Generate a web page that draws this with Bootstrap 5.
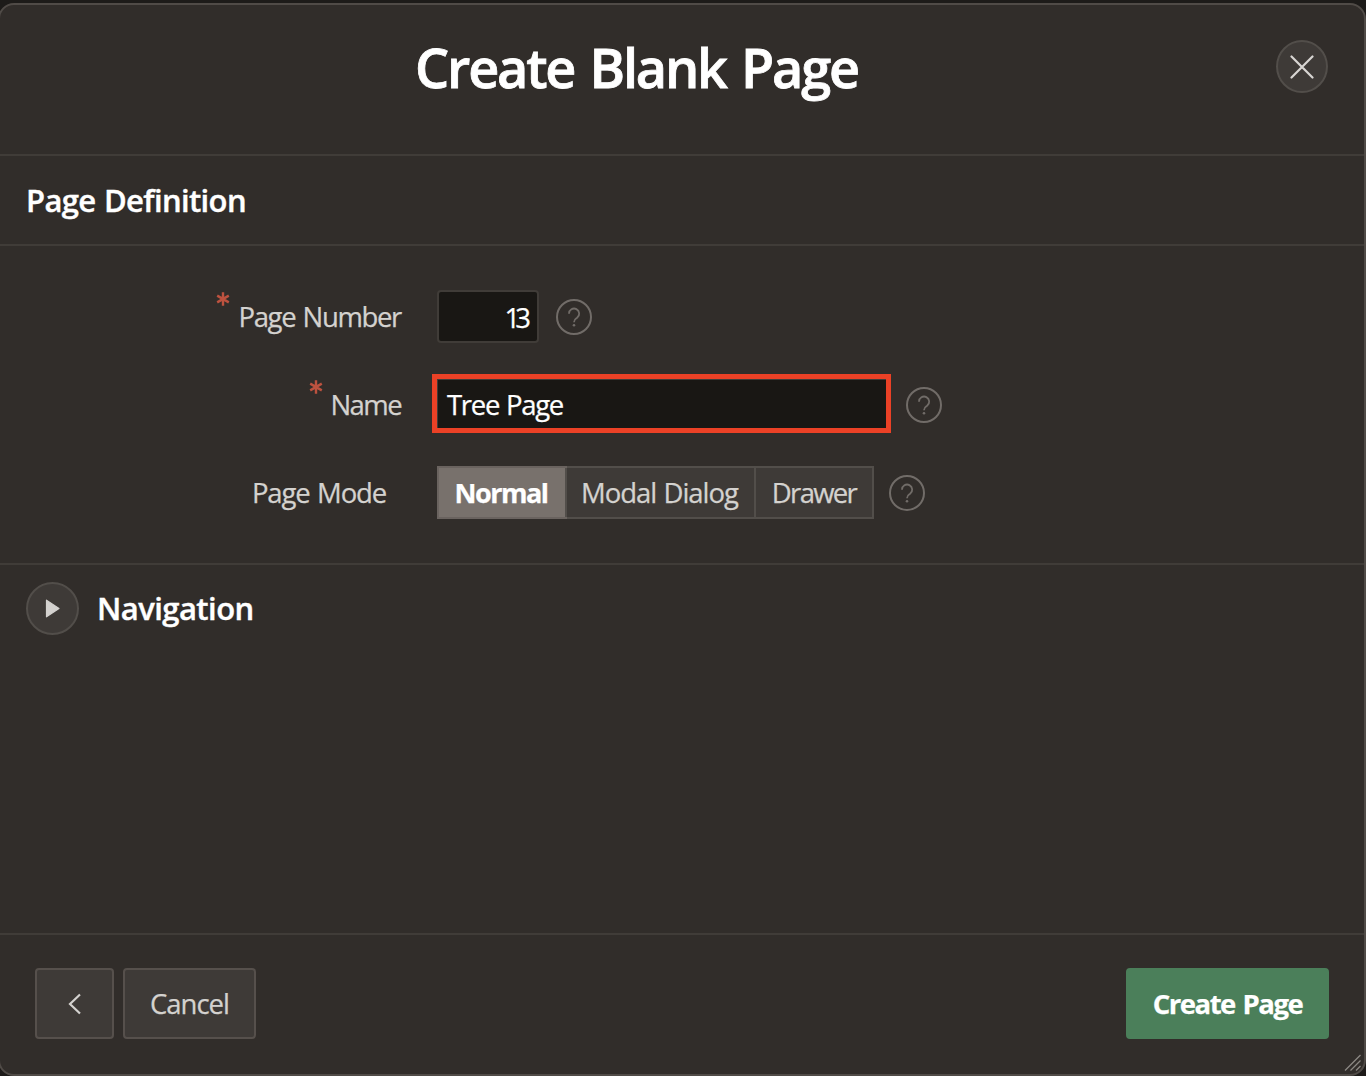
<!DOCTYPE html>
<html lang="en" data-bs-theme="dark">
<head>
<meta charset="utf-8">
<meta name="viewport" content="width=device-width, initial-scale=1">
<title>Create Blank Page</title>
<link href="https://cdn.jsdelivr.net/npm/bootstrap@5.3.0/dist/css/bootstrap.min.css" rel="stylesheet">
<style>
  body { margin: 0; height: 1076px; overflow: hidden; background: #1d1b19; font-family: "Open Sans", "Noto Sans", sans-serif; font-size: 27.5px; line-height: 1.3; color: #d4d2cf; padding-top: 3px; -webkit-text-stroke: .25px currentColor; }
  .wizard { height: 1073px; width: 1368px; margin-left: -2px; background: #312d2a; border: 2px solid #504b47; border-radius: 16px; overflow: hidden; position: relative; }
  .wizard > * { flex-shrink: 0; }
  .rule-b { border-bottom: 2px solid #403c38; }
  .wizard-head { height: 151px; padding: 35px 36px 0 0; }
  .wizard-title { font-size: 54px; font-weight: 600; line-height: 60px; color: #fff; margin: -3px 0 0 415px; letter-spacing: -2.2px; word-spacing: 3.5px; -webkit-text-stroke: .8px currentColor; }
  .round-btn { width: 53px; height: 53px; border: 2px solid #524e4a; border-radius: 50%; background: #3e3a37; padding: 0; flex: none; }
  .wizard-head .round-btn { width: 52px; }
  .region-head { height: 90px; padding-left: 26px; }
  .region-title { font-size: 31px; font-weight: 600; line-height: 40px; color: #fff; margin: 0; -webkit-text-stroke: .4px currentColor; }
  .fields { height: 319px; padding-top: 44px; }
  .field-line { height: 53px; margin-bottom: 35px; }
  .field-label { width: 437px; padding-right: 36px; margin-top: 1px; text-align: right; white-space: nowrap; flex: none; }
  .field-label.opt { padding-right: 51px; }
  .req { margin-right: 8px; margin-top: -36px; }
  .field-input { height: 53px; border: 2px solid #403c38; border-radius: 4px; background: #191714; color: #fff; padding: 2px 7px 0; font-size: 27.5px; }
  .num { width: 102px; padding-right: 11px; }
  .hl { width: 459px; height: 59px; border: 5px solid #eb4126; margin: -2px 0 0 -5px; background: #191714; flex: none; }
  .hl .field-input { width: 449px; height: 49px; border-width: 1px 0 0 1px; border-radius: 0; padding-left: 9px; }
  .modes { height: 53px; border: 2px solid #524e4a; border-radius: 0; background: #3e3a37; }
  .mode { border: 0; border-radius: 0; padding: 0; background: none; color: #d4d2cf; font: inherit; line-height: 50px; white-space: nowrap; text-align: center; }
  .mode + .mode { border-left: 2px solid #524e4a; }
  .mode.on { background: #78716c; color: #fff; font-weight: 700; box-shadow: 0 0 0 2px #6a635f; }
  .help { flex: none; width: 36px; height: 36px; margin: 1px 0 0 15px; }
  .num + .help { margin-left: 17px; }
  .nav-region { height: 368px; padding: 17px 0 0 26px; }
  .wizard-foot { height: 141px; border-top: 2px solid #403c38; padding: 33px 35px 0 35px; }
  .foot-btn { height: 71px; border: 2px solid #56504c; border-radius: 4px; background: #3e3a37; color: #d4d2cf; font-size: 27.5px; padding: 0; white-space: nowrap; }
  .back { width: 79px; }
  .cancel { width: 133px; margin-left: 9px; }
  .foot-btn.go { width: 203px; background: #4b7f5a; border-color: #4b7f5a; color: #fff; font-weight: 700; }
  .grip { position: absolute; right: 3px; bottom: 3px; }
  .t-num { letter-spacing: -1.35px; word-spacing: 1.5px } .t-name { letter-spacing: -1.6px } .t-mode { letter-spacing: -1.15px; word-spacing: 1.5px }
  .t-13 { letter-spacing: -5px } .t-tree { letter-spacing: -1.3px; word-spacing: 1px } .t-on { letter-spacing: -1.5px; font-size: 27px; margin-left: -2px }
  .t-md { letter-spacing: -1px; word-spacing: 1px; margin-left: -2px } .t-dr { letter-spacing: -1.7px } .t-can { letter-spacing: -1px }
  .t-go { letter-spacing: -1.5px; word-spacing: 2px } .t-pd { letter-spacing: -.63px; word-spacing: 1px } .t-nav { letter-spacing: -.55px; margin: 6px 0 0 18px }
</style>
<script src="https://cdn.jsdelivr.net/npm/bootstrap@5.3.0/dist/js/bootstrap.bundle.min.js"></script>
</head>
<body>
<svg width="0" height="0" class="d-none">
  <symbol id="help" viewBox="0 0 36 36"><g fill="none" stroke="#716c68"><circle cx="18" cy="18" r="17" stroke-width="2"/><path d="M13 14.7a5.1 5.1 0 1 1 8.1 4.1c-1.9 1.3-3.1 1.9-3.1 4.4" stroke-width="1.8"/></g><circle cx="18" cy="26.3" r="1.3" fill="#716c68"/></symbol>
  <symbol id="req" viewBox="0 0 14 14"><path d="M7 .3v13.4M1.2 3.6l11.6 6.8M12.8 3.6 1.2 10.4" stroke="#bd523f" stroke-width="2.4"/></symbol>
</svg>
<main class="wizard d-flex flex-column">
  <header class="wizard-head rule-b d-flex justify-content-between align-items-start">
    <h1 class="wizard-title">Create Blank Page</h1>
    <button class="btn round-btn d-flex align-items-center justify-content-center" type="button" aria-label="Close"><svg width="24" height="24" viewBox="0 0 24 24"><path d="M1.5 1.5l21 21M22.5 1.5l-21 21" stroke="#d8d6d3" stroke-width="2.2" stroke-linecap="round"/></svg></button>
  </header>
  <div class="region-head rule-b d-flex align-items-center"><h2 class="region-title t-pd">Page Definition</h2></div>
  <form class="fields rule-b">
    <div class="field-line d-flex align-items-center">
      <label class="field-label d-flex align-items-center justify-content-end"><svg class="req" width="14" height="14"><use href="#req"/></svg><span class="t-num">Page Number</span></label>
      <div class="field-input num d-flex align-items-center justify-content-end"><span class="t-13">13</span></div>
      <svg class="help"><use href="#help"/></svg>
    </div>
    <div class="field-line d-flex align-items-center">
      <label class="field-label d-flex align-items-center justify-content-end"><svg class="req" width="14" height="14"><use href="#req"/></svg><span class="t-name">Name</span></label>
      <div class="hl"><div class="field-input d-flex align-items-center"><span class="t-tree">Tree Page</span></div></div>
      <svg class="help"><use href="#help"/></svg>
    </div>
    <div class="field-line d-flex align-items-center">
      <label class="field-label opt"><span class="t-mode">Page Mode</span></label>
      <div class="modes d-flex">
        <button type="button" class="mode on" style="width:126px"><span class="t-on">Normal</span></button>
        <button type="button" class="mode" style="width:189px"><span class="t-md">Modal Dialog</span></button>
        <button type="button" class="mode" style="width:118px"><span class="t-dr">Drawer</span></button>
      </div>
      <svg class="help"><use href="#help"/></svg>
    </div>
  </form>
  <section class="nav-region d-flex align-items-start">
    <button class="btn round-btn d-flex align-items-center justify-content-center" type="button" aria-label="Expand"><svg width="15" height="19" viewBox="0 0 15 19"><path d="M1.5 1.2v16.6L14 9.5z" fill="#d4d2cf" stroke="#d4d2cf" stroke-width="1.2" stroke-linejoin="round"/></svg></button>
    <h2 class="region-title t-nav">Navigation</h2>
  </section>
  <footer class="wizard-foot d-flex align-items-start">
    <button class="btn foot-btn back d-flex align-items-center justify-content-center" type="button" aria-label="Back"><svg width="14" height="22" viewBox="0 0 14 22"><path d="M12 1.5 2 11l10 9.5" fill="none" stroke="#d4d2cf" stroke-width="2.2"/></svg></button>
    <button class="btn foot-btn cancel" type="button"><span class="t-can">Cancel</span></button>
    <button class="btn foot-btn go ms-auto" type="button"><span class="t-go">Create Page</span></button>
  </footer>
  <svg class="grip" width="17" height="17" viewBox="0 0 17 17"><path d="M1 16.5 16.5 1M6.5 16.5l10-10M12 16.5l4.5-4.5" stroke="#8b8783" stroke-width="1.3"/></svg>
</main>
</body>
</html>
